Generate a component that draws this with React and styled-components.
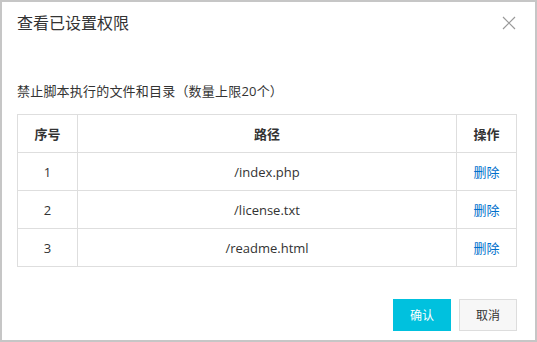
import React from 'react';
import styled, { createGlobalStyle } from 'styled-components';

const GlobalStyle = createGlobalStyle`
  html, body {
    margin: 0;
    padding: 0;
    background: #ffffff;
  }
  body {
    font-family: "Segoe UI", "Open Sans", "Noto Sans CJK SC", sans-serif;
    color: #333;
  }
`;

const Dialog = styled.div`
  width: 537px;
  height: 342px;
  box-sizing: border-box;
  border: 2px solid #c6c6c6;
  background: #fff;
  display: flex;
  flex-direction: column;
`;

const Header = styled.div`
  height: 41px;
  display: flex;
  align-items: center;
  justify-content: space-between;
  padding: 0 19px 0 15px;
`;

const Title = styled.h2`
  margin: 0;
  font-size: 16px;
  font-weight: normal;
  line-height: 24px;
  color: #333;
`;

const CloseButton = styled.button`
  border: none;
  background: none;
  padding: 0;
  width: 14px;
  height: 14px;
  display: flex;
  cursor: pointer;
`;

const Body = styled.div`
  padding: 38px 18px 0 15px;
  flex: 1;
`;

const Note = styled.p`
  margin: 0 0 13px;
  font-size: 13px;
  line-height: 20px;
  letter-spacing: 0.2px;
  color: #333;
`;

const Table = styled.table`
  width: 500px;
  border-collapse: collapse;
  font-size: 13px;
  color: #333;
`;

const Th = styled.th`
  height: 37px;
  border: 1px solid #dedede;
  font-weight: bold;
  text-align: center;
  padding: 0;
  width: ${(p) => (p.$wide ? 'auto' : '59px')};
`;

const Td = styled.td`
  height: 37px;
  border: 1px solid #dedede;
  text-align: center;
  padding: 0;
`;

const DeleteLink = styled.a`
  color: #0070cc;
  text-decoration: none;
  cursor: pointer;
`;

const Footer = styled.div`
  display: flex;
  justify-content: flex-end;
  gap: 8px;
  padding: 0 18px 9px 0;
`;

const Button = styled.button`
  width: 58px;
  height: 32px;
  box-sizing: border-box;
  font-family: inherit;
  font-size: 12px;
  cursor: pointer;
  border: 1px solid ${(p) => (p.$primary ? '#00c1de' : '#dddddd')};
  background: ${(p) => (p.$primary ? '#00c1de' : '#f7f7f7')};
  color: ${(p) => (p.$primary ? '#ffffff' : '#333333')};
`;

const rows = ['/index.php', '/license.txt', '/readme.html'];

const App = () => (
  <>
    <GlobalStyle />
    <Dialog>
      <Header>
        <Title>查看已设置权限</Title>
        <CloseButton aria-label="关闭">
          <svg width="14" height="14" viewBox="0 0 14 14">
            <path d="M1 1 L13 13 M13 1 L1 13" stroke="#999" strokeWidth="1.2" fill="none" />
          </svg>
        </CloseButton>
      </Header>
      <Body>
        <Note>禁止脚本执行的文件和目录（数量上限20个）</Note>
        <Table>
          <thead>
            <tr>
              <Th>序号</Th>
              <Th $wide>路径</Th>
              <Th>操作</Th>
            </tr>
          </thead>
          <tbody>
            {rows.map((path, i) => (
              <tr key={path}>
                <Td>{i + 1}</Td>
                <Td>{path}</Td>
                <Td>
                  <DeleteLink>删除</DeleteLink>
                </Td>
              </tr>
            ))}
          </tbody>
        </Table>
      </Body>
      <Footer>
        <Button $primary>确认</Button>
        <Button>取消</Button>
      </Footer>
    </Dialog>
  </>
);

export default App;
